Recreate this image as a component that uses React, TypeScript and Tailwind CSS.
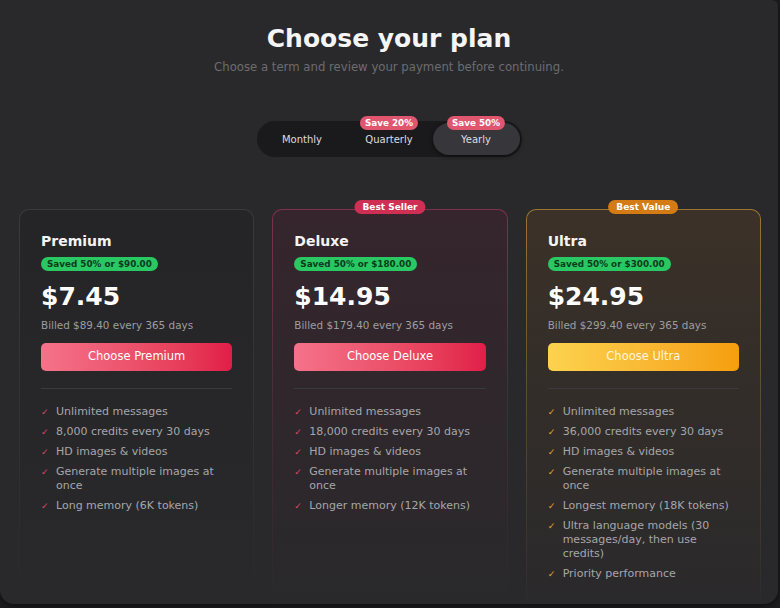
import React from "react";

type Plan = {
  name: string;
  saved: string;
  price: string;
  billed: string;
  cta: string;
  tag?: string;
  features: string[];
  tone: "plain" | "pink" | "gold";
};

const PLANS: Plan[] = [
  {
    name: "Premium",
    saved: "Saved 50% or $90.00",
    price: "$7.45",
    billed: "Billed $89.40 every 365 days",
    cta: "Choose Premium",
    tone: "plain",
    features: [
      "Unlimited messages",
      "8,000 credits every 30 days",
      "HD images & videos",
      "Generate multiple images at once",
      "Long memory (6K tokens)",
    ],
  },
  {
    name: "Deluxe",
    saved: "Saved 50% or $180.00",
    price: "$14.95",
    billed: "Billed $179.40 every 365 days",
    cta: "Choose Deluxe",
    tag: "Best Seller",
    tone: "pink",
    features: [
      "Unlimited messages",
      "18,000 credits every 30 days",
      "HD images & videos",
      "Generate multiple images at once",
      "Longer memory (12K tokens)",
    ],
  },
  {
    name: "Ultra",
    saved: "Saved 50% or $300.00",
    price: "$24.95",
    billed: "Billed $299.40 every 365 days",
    cta: "Choose Ultra",
    tag: "Best Value",
    tone: "gold",
    features: [
      "Unlimited messages",
      "36,000 credits every 30 days",
      "HD images & videos",
      "Generate multiple images at once",
      "Longest memory (18K tokens)",
      "Ultra language models (30 messages/day, then use credits)",
      "Priority performance",
    ],
  },
];

const TONE = {
  plain: {
    border: "bg-gradient-to-b from-[#3a3a3d] via-[#323235] to-[#29292c]",
    inner: "bg-gradient-to-b from-[#252527] to-[#29292c]",
    button: "bg-gradient-to-r from-[#f4728a] to-[#e11d48] text-white",
    check: "text-[#d94a68]",
    tag: "",
  },
  pink: {
    border: "bg-gradient-to-b from-[#80324a] via-[#4a2a35] to-[#29292c]",
    inner: "bg-gradient-to-b from-[#36252d] via-[#2f272c] to-[#29292c]",
    button: "bg-gradient-to-r from-[#f4728a] to-[#e11d48] text-white",
    check: "text-[#d94a68]",
    tag: "bg-[#cf2f52]",
  },
  gold: {
    border: "bg-gradient-to-b from-[#9c7632] via-[#5a4a30] to-[#2c2b2c]",
    inner: "bg-gradient-to-b from-[#3b3128] via-[#322d29] to-[#2a292b]",
    button: "bg-gradient-to-r from-[#fcd34d] to-[#f59e0b] text-[#fff6dc]",
    check: "text-[#e8a42a]",
    tag: "bg-[#d47b14]",
  },
};

function PlanCard({ plan }: { plan: Plan }) {
  const t = TONE[plan.tone];
  return (
    <div className={`relative rounded-[10px] p-px ${t.border}`}>
      {plan.tag && (
        <span
          className={`absolute -top-[9px] left-1/2 -translate-x-1/2 z-10 h-[14px] px-[8px] rounded-full text-[9px] leading-[14px] font-bold text-white whitespace-nowrap ${t.tag}`}
        >
          {plan.tag}
        </span>
      )}
      <div className={`h-full rounded-[9px] px-[21px] pt-[22px] pb-[24px] ${t.inner}`}>
        <h2 className="text-[14px] leading-[18px] font-bold text-[#f4f4f5]">{plan.name}</h2>
        <div className="mt-[7px] flex">
          <span className="h-[14px] px-[6px] rounded-full bg-[#29c862] text-[#0c3a1c] text-[8.8px] leading-[14px] font-bold">
            {plan.saved}
          </span>
        </div>
        <p className="mt-[11px] text-[25px] leading-[30px] font-bold text-white">{plan.price}</p>
        <p className="mt-[6px] text-[10.4px] leading-[14px] text-[#9d9da2]">{plan.billed}</p>
        <button
          className={`mt-[11px] w-full h-[28px] rounded-[5px] text-[11.5px] ${t.button}`}
        >
          {plan.cta}
        </button>
        <div className="mt-[17px] h-px bg-[#3a3a3d]" />
        <ul className="mt-[16px] space-y-[6px]">
          {plan.features.map((f) => (
            <li key={f} className="flex gap-[7px] text-[11px] leading-[14px] text-[#a6a6ab]">
              <span className={`w-[8px] shrink-0 text-[9px] ${t.check}`}>✓</span>
              <span>{f}</span>
            </li>
          ))}
        </ul>
      </div>
    </div>
  );
}

export default function App() {
  const terms = [
    { label: "Monthly" },
    { label: "Quarterly", badge: "Save 20%" },
    { label: "Yearly", badge: "Save 50%", active: true },
  ];
  return (
    <div
      className="w-[780px] h-[608px] bg-[#1c1c1e] overflow-hidden"
      style={{ fontFamily: '"DejaVu Sans", Verdana, sans-serif' }}
    >
      <div className="w-[778px] h-[604px] bg-[#29292c] rounded-b-[14px] rounded-tr-[6px] overflow-hidden shadow-[0_2px_6px_rgba(0,0,0,0.5)]">
        <div className="pt-[24px] text-center">
          <h1 className="text-[25px] leading-[30px] font-bold text-[#f5f5f6]">Choose your plan</h1>
          <p className="mt-[6px] text-[11.7px] leading-[14px] text-[#6c6c71]">
            Choose a term and review your payment before continuing.
          </p>
        </div>

        <div className="mt-[47px] flex justify-center">
          <div className="flex p-[2px] rounded-full bg-[#1a1a1c]">
            {terms.map((t) => (
              <div
                key={t.label}
                className={`relative w-[87px] h-[32px] flex items-center justify-center rounded-full text-[10px] text-[#dcdce0] ${
                  t.active ? "bg-[#37373b] shadow-[0_1px_4px_rgba(0,0,0,0.6)]" : ""
                }`}
              >
                {t.badge && (
                  <span className="absolute -top-[7px] left-1/2 -translate-x-1/2 h-[14px] px-[5px] rounded-full bg-[#e0566f] text-white text-[8.8px] leading-[14px] font-bold whitespace-nowrap">
                    {t.badge}
                  </span>
                )}
                <span className="mt-[1px]">{t.label}</span>
              </div>
            ))}
          </div>
        </div>

        <div className="mt-[52px] pl-[19px] pr-[17px] grid grid-cols-3 gap-[18px]">
          {PLANS.map((p) => (
            <PlanCard key={p.name} plan={p} />
          ))}
        </div>
      </div>
    </div>
  );
}
